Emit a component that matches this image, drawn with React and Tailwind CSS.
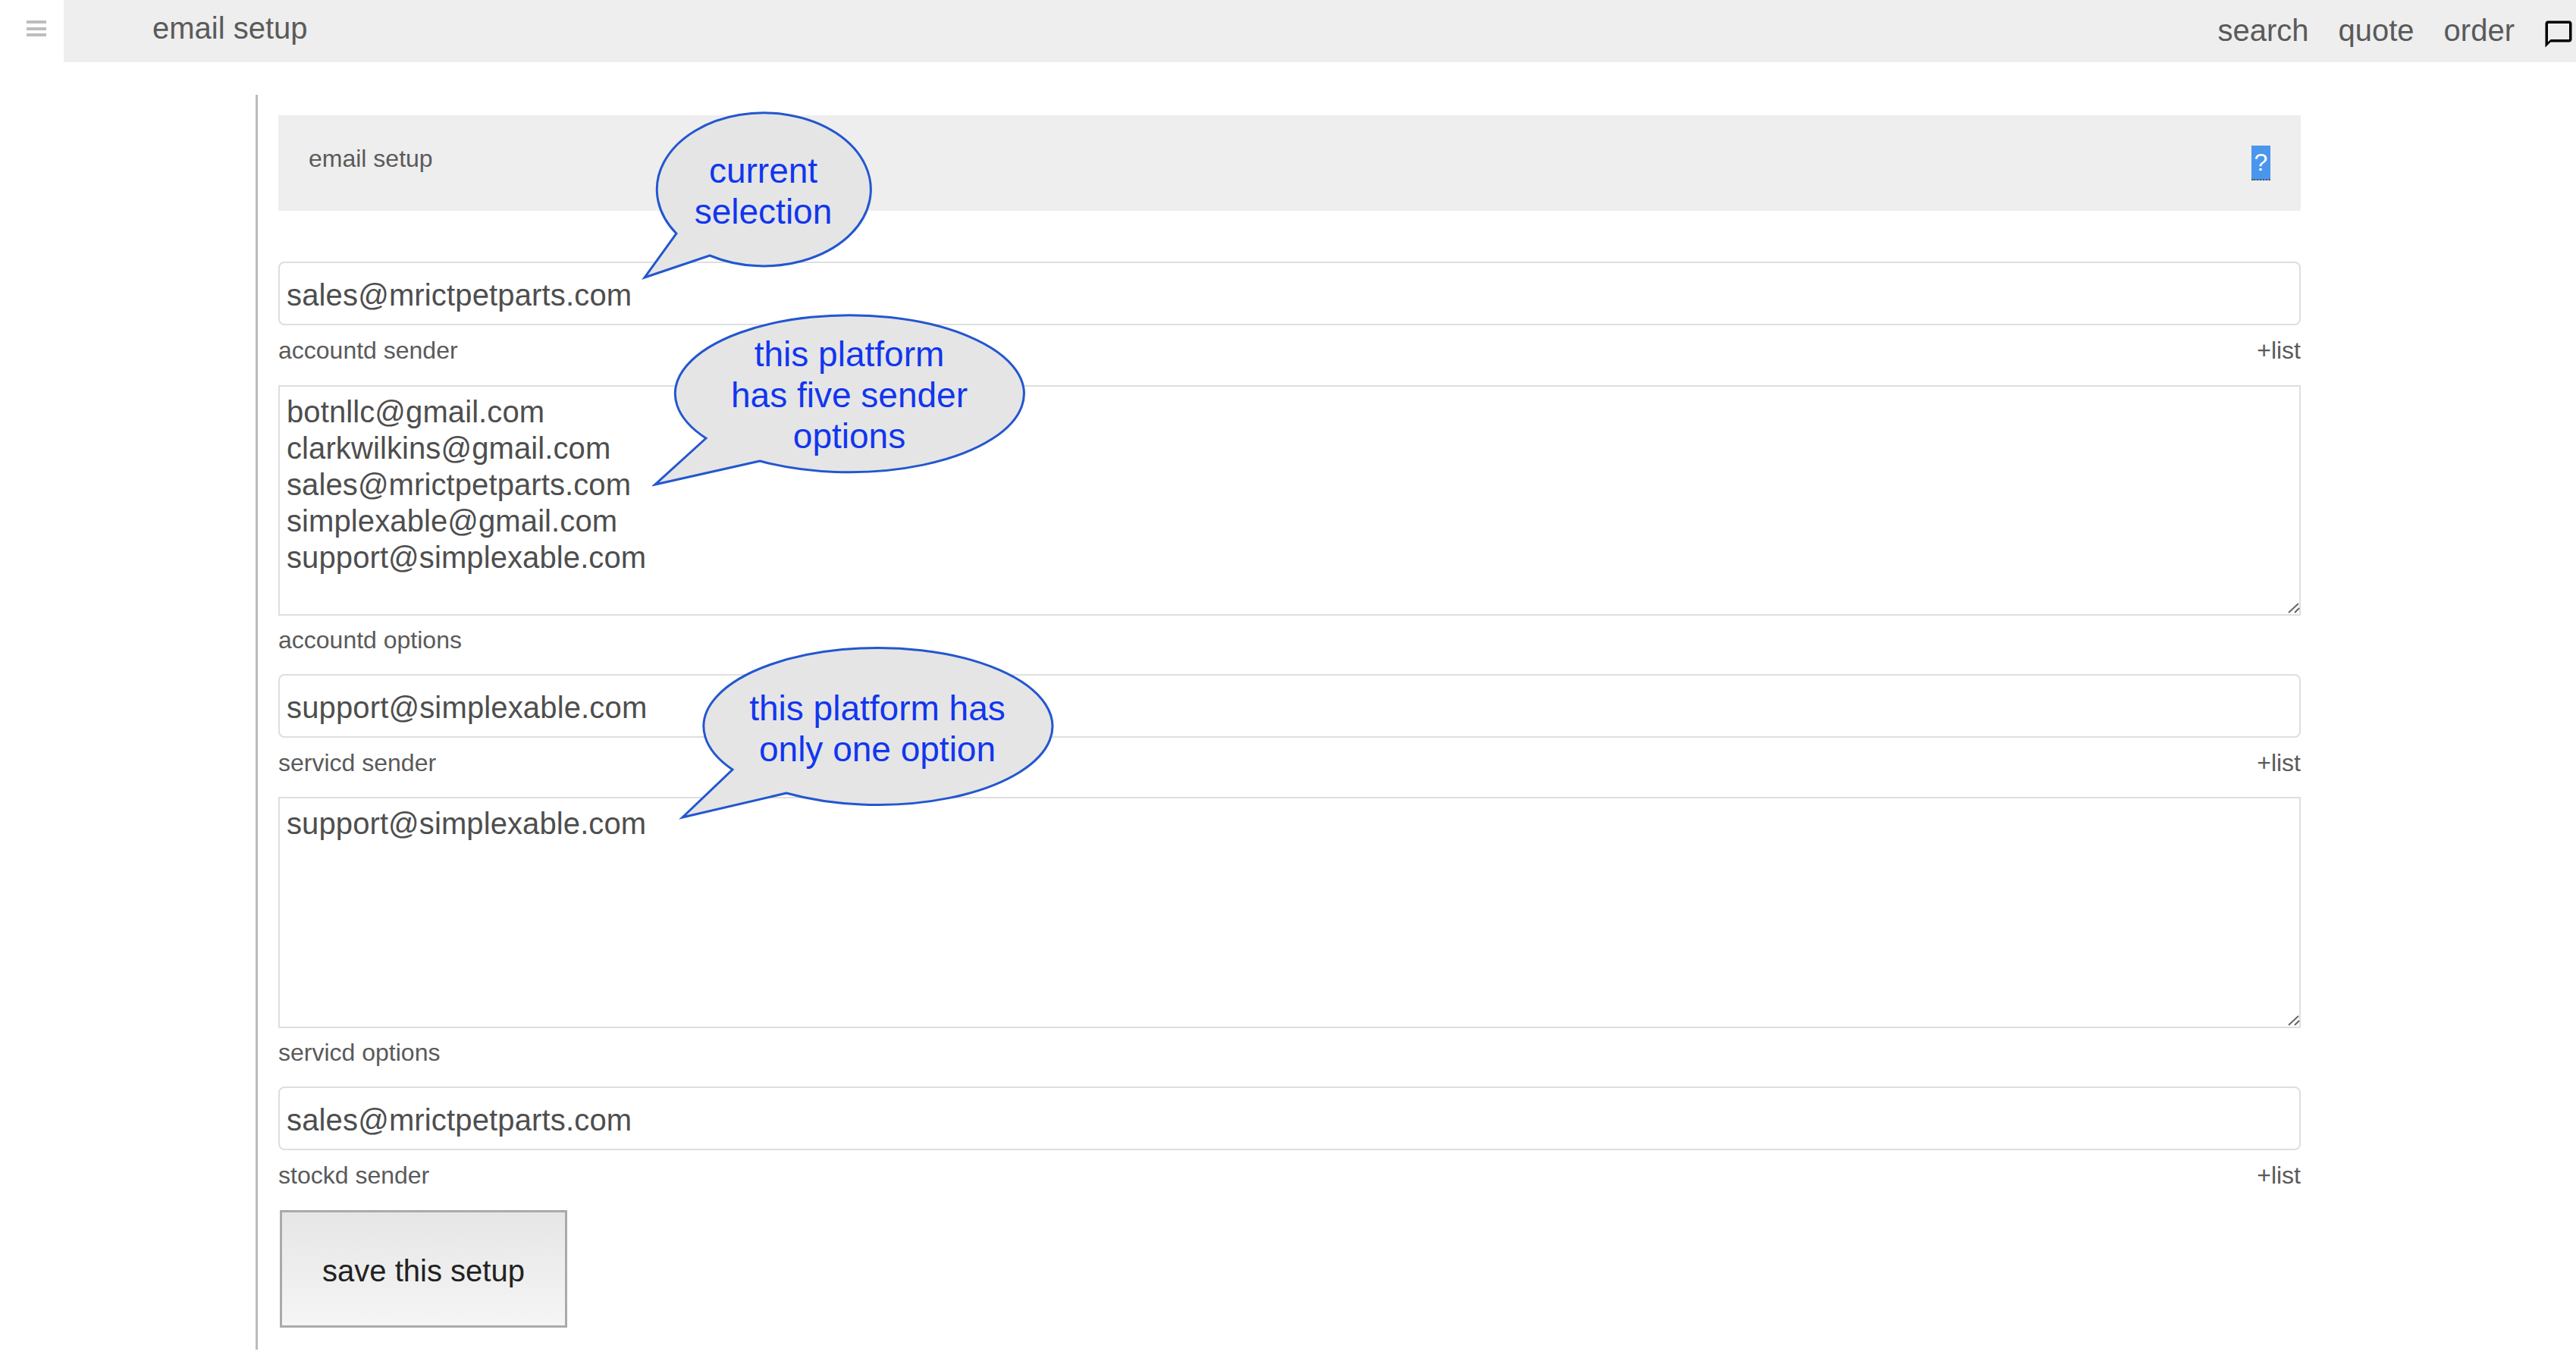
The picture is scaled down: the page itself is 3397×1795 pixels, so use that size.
import React from 'react';

const Callout = ({ box, viewBox, d, textClass, lines }) => (
  <div className={`absolute ${box}`}>
    <svg viewBox={viewBox} className="absolute inset-0 h-full w-full">
      <path d={d} fill="#e5e5e5" stroke="#2357cf" strokeWidth="3" strokeLinejoin="miter" />
    </svg>
    <div className={`absolute text-center text-[46px] leading-[54px] text-[#1136ee] ${textClass}`}>
      {lines.map((line) => (
        <div key={line}>{line}</div>
      ))}
    </div>
  </div>
);

const SenderInput = ({ value }) => (
  <input
    readOnly
    defaultValue={value}
    className="block h-[84px] w-full rounded-lg border-2 border-[#dedede] bg-white px-[9px] pt-[5px] text-[40px] tracking-[0.15px] text-[#4e4e4e] outline-none"
  />
);

const OptionsArea = ({ value, heightClass }) => (
  <div className="relative">
    <textarea
      readOnly
      defaultValue={value}
      className={`block w-full resize-none rounded-none border-2 border-[#dedede] bg-white px-[9px] py-[9px] text-[40px] leading-[48px] tracking-[0.1px] text-[#4e4e4e] outline-none ${heightClass}`}
    />
    {/* resize handle */}
    <svg viewBox="0 0 16 14" className="pointer-events-none absolute bottom-[3px] right-[1px] h-[14px] w-[16px] stroke-[#666666]" strokeWidth="2">
      <path d="M1 13 L14 1 M9 13 L15 7" />
    </svg>
  </div>
);

const FieldLabel = ({ label, showList, rowClass }) => (
  <div className={`flex justify-between text-[32px] leading-[38px] text-[#5a5a5a] ${rowClass}`}>
    <span>{label}</span>
    {showList && <span>+list</span>}
  </div>
);

export default function App() {
  return (
    <div className="relative min-h-[1795px] overflow-hidden bg-white font-['Liberation_Sans',Arial,sans-serif]">
      {/* Top bar */}
      <header className="flex h-[82px]">
        <div className="flex w-[84px] shrink-0 pl-[35px] pt-[27px]">
          <div className="flex h-[21px] w-[26px] flex-col justify-between">
            <div className="h-[4px] bg-[#bdbdbd]" />
            <div className="h-[4px] bg-[#bdbdbd]" />
            <div className="h-[4px] bg-[#bdbdbd]" />
          </div>
        </div>
        <div className="flex flex-1 items-start justify-between bg-[#eeeeee] pl-[117px] pr-[2px] text-[40px] text-[#5a5a5a]">
          <span className="pt-[14px] leading-[46px]">email setup</span>
          <nav className="flex items-start">
            <span className="pt-[17px] leading-[46px]">search</span>
            <span className="ml-[39px] pt-[17px] leading-[46px]">quote</span>
            <span className="ml-[39px] pt-[17px] leading-[46px]">order</span>
            <svg viewBox="0 0 24 24" className="ml-[37px] mt-[24px] h-[42px] w-[42px] fill-black">
              <path d="M20 2H4c-1.1 0-2 .9-2 2v18l4-4h14c1.1 0 2-.9 2-2V4c0-1.1-.9-2-2-2zm0 14H6l-2 2V4h16v12z" />
            </svg>
          </nav>
        </div>
      </header>

      {/* Form column */}
      <main className="ml-[337px] mt-[43px] w-[2697px] border-l-[3px] border-[#bbbbbb] pb-[29px] pl-[27px] pt-[27px]">
        <div className="mb-[67px] flex h-[126px] items-start justify-between bg-[#eeeeee] pl-[40px] pr-[40px] text-[32px] text-[#5a5a5a]">
          <span className="pt-[38px] leading-[38px]">email setup</span>
          <span className="mt-[40px] h-[46px] w-[25px] border-b-2 border-dotted border-[#555555] bg-[#4a96ed] text-center leading-[44px] text-white">?</span>
        </div>

        <SenderInput value="sales@mrictpetparts.com" />
        <FieldLabel label="accountd sender" showList rowClass="h-[79px] pt-[14px]" />
        <OptionsArea heightClass="h-[304px]" value={'botnllc@gmail.com\nclarkwilkins@gmail.com\nsales@mrictpetparts.com\nsimplexable@gmail.com\nsupport@simplexable.com'} />
        <FieldLabel label="accountd options" rowClass="h-[77px] pt-[13px]" />
        <SenderInput value="support@simplexable.com" />
        <FieldLabel label="servicd sender" showList rowClass="h-[78px] pt-[14px]" />
        <OptionsArea heightClass="h-[305px]" value="support@simplexable.com" />
        <FieldLabel label="servicd options" rowClass="h-[77px] pt-[13px]" />
        <SenderInput value="sales@mrictpetparts.com" />
        <FieldLabel label="stockd sender" showList rowClass="h-[79px] pt-[14px]" />

        <button className="ml-[2px] block h-[155px] w-[379px] border-[3px] border-[#aaaaaa] bg-linear-to-b from-[#e6e6e6] to-[#f5f5f5] pt-[4px] text-[40px] text-[#222222]">
          save this setup
        </button>
      </main>

      {/* Annotations */}
      <Callout
        box="left-[845px] top-[143px] h-[230px] w-[310px]"
        viewBox="845 143 310 230"
        d="M936 337 L850 366 L892 308 A141 101 0 1 1 936 337 Z"
        textClass="left-[20px] top-[55px] w-[283px]"
        lines={['current', 'selection']}
      />
      <Callout
        box="left-[860px] top-[410px] h-[235px] w-[495px]"
        viewBox="860 410 495 235"
        d="M1002 608 L864 639 L931 578 A230 103.5 0 1 1 1002 608 Z"
        textClass="left-[30px] top-[30px] w-[460px]"
        lines={['this platform', 'has five sender', 'options']}
      />
      <Callout
        box="left-[895px] top-[849px] h-[235px] w-[498px]"
        viewBox="895 849 498 235"
        d="M1037 1046 L900 1078 L966 1015 A230 103.5 0 1 1 1037 1046 Z"
        textClass="left-[32px] top-[58px] w-[460px]"
        lines={['this platform has', 'only one option']}
      />
    </div>
  );
}
